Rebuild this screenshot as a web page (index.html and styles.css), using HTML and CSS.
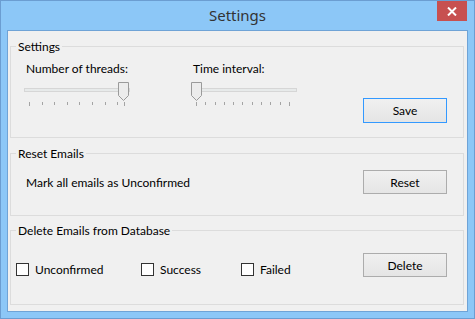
FILE: index.html
```html
<!DOCTYPE html>
<html lang="en">
<head>
<meta charset="UTF-8">
<title>Settings</title>
<link rel="stylesheet" href="styles.css">
</head>
<body>
<div class="window">
  <div class="titlebar">
    <span class="title">Settings</span>
    <div class="close">
      <svg width="10" height="9" viewBox="0 0 10 9"><path d="M1 0.5 L9 8.5 M9 0.5 L1 8.5" stroke="#fff" stroke-width="2"/></svg>
    </div>
  </div>

  <div class="client">
    <fieldset class="group group-settings">
      <legend>Settings</legend>
      <div class="slider-col">
        <div class="slider-label">Number of threads:</div>
        <div class="slider">
          <div class="track"></div>
          <svg class="thumb thumb-threads" width="11" height="19" viewBox="0 0 11 19"><path d="M0.5 0.5 H10.5 V13.5 L5.5 18.5 L0.5 13.5 Z" fill="#ececec" stroke="#9a9a9a"/></svg>
          <div class="ticks ticks-threads">
            <i class="tick long"></i><i class="tick"></i><i class="tick"></i><i class="tick"></i>
            <i class="tick"></i><i class="tick"></i><i class="tick"></i><i class="tick"></i>
            <i class="tick long end"></i>
          </div>
        </div>
      </div>
      <div class="slider-col">
        <div class="slider-label">Time interval:</div>
        <div class="slider">
          <div class="track"></div>
          <svg class="thumb" width="11" height="19" viewBox="0 0 11 19"><path d="M0.5 0.5 H10.5 V13.5 L5.5 18.5 L0.5 13.5 Z" fill="#ececec" stroke="#9a9a9a"/></svg>
          <div class="ticks ticks-interval">
            <i class="tick long"></i><i class="tick"></i><i class="tick"></i><i class="tick"></i>
            <i class="tick"></i><i class="tick"></i><i class="tick"></i><i class="tick"></i>
            <i class="tick"></i><i class="tick"></i><i class="tick long"></i>
          </div>
        </div>
      </div>
      <button class="btn btn-default btn-save">Save</button>
    </fieldset>

    <fieldset class="group group-reset">
      <legend>Reset Emails</legend>
      <span class="note">Mark all emails as Unconfirmed</span>
      <button class="btn">Reset</button>
    </fieldset>

    <fieldset class="group group-delete">
      <legend>Delete Emails from Database</legend>
      <label class="check check-a"><span class="box"></span>Unconfirmed</label>
      <label class="check check-b"><span class="box"></span>Success</label>
      <label class="check"><span class="box"></span>Failed</label>
      <button class="btn btn-delete">Delete</button>
    </fieldset>
  </div>
</div>
</body>
</html>
```

FILE: styles.css
```css
body {
  margin: 0;
  font-family: Lato, "Noto Sans", sans-serif;
  font-size: 12px;
  color: #000;
}
.window {
  position: relative;
  width: 475px;
  height: 319px;
  box-sizing: border-box;
  border: 1px solid #6b9dd1;
  background: #8cc7f7;
  display: flex;
  flex-direction: column;
}
.titlebar {
  height: 29px;
  display: flex;
  align-items: center;
  justify-content: center;
}
.title {
  font-family: "Noto Sans", sans-serif;
  font-size: 15px;
  color: #333;
  margin-top: -1px;
}
.close {
  position: absolute;
  top: 0;
  right: 7px;
  width: 30px;
  height: 20px;
  background: #c75050;
  display: flex;
  align-items: center;
  justify-content: center;
}
.client {
  flex: 1;
  margin: 0 6px 6px 6px;
  border: 1px solid #6fa3d6;
  background: #f0f0f0;
  padding: 8px 3px 0 2px;
}
.group {
  margin: 0;
  border: 1px solid #dcdcdc;
  box-sizing: border-box;
  display: flex;
  align-items: flex-start;
  padding-left: 5px;
  padding-right: 16px;
}
.group legend {
  padding: 0 2px;
  margin-left: 0;
  line-height: 15px;
}
.group-settings {
  height: 99px;
  padding-top: 7px;
}
.group-reset {
  height: 70px;
  margin-top: 8px;
  padding-top: 9px;
}
.group-delete {
  height: 82px;
  margin-top: 7px;
  padding-top: 15px;
}
.slider-col {
  width: 106px;
  margin-left: 8px;
  margin-right: 61px;
}
.slider-col + .slider-col {
  margin-left: 0;
}
.slider-label {
  padding-left: 2px;
  line-height: 15px;
}
.slider {
  position: relative;
  margin-top: 6px;
  padding-top: 6px;
  height: 24px;
}
.track {
  height: 2px;
  border: 1px solid #d6d6d6;
  background: #e7eaea;
}
.thumb {
  position: absolute;
  top: 0;
  left: 0;
}
.thumb-threads {
  left: 94px;
}
.ticks {
  display: flex;
  align-items: flex-start;
  margin-top: 10px;
  padding-left: 5px;
}
.tick {
  width: 1px;
  height: 3px;
  background: #a4a4a4;
}
.tick.long {
  height: 4px;
}
.ticks-threads {
  gap: 11.6px;
}
.ticks-threads .end {
  margin-left: -6px;
}
.ticks-interval {
  width: 94px;
  justify-content: space-between;
}
.btn {
  margin-left: auto;
  width: 84px;
  height: 24px;
  border: 1px solid #acacac;
  background: linear-gradient(#f0f0f0, #e5e5e5);
  font-family: inherit;
  font-size: 12px;
  color: #000;
  padding: 0;
}
.btn-default {
  border-color: #3399ff;
}
.btn-save {
  height: 25px;
  margin-top: 37px;
}
.note {
  margin-left: 10px;
  margin-top: 5px;
  line-height: 15px;
}
.check {
  display: flex;
  align-items: center;
  margin-top: 9px;
  line-height: 15px;
}
.check-a {
  width: 125px;
}
.check-b {
  width: 100px;
}
.box {
  width: 11px;
  height: 11px;
  border: 1px solid #333;
  background: #fff;
  margin-right: 6px;
}
```
